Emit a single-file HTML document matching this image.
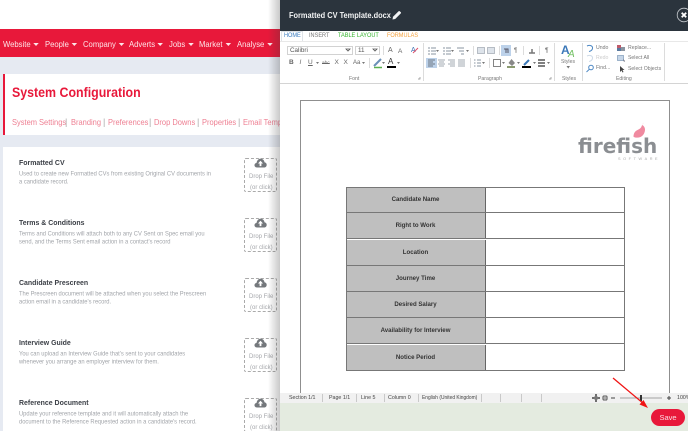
<!DOCTYPE html>
<html><head><meta charset="utf-8">
<style>
*{box-sizing:border-box}
html,body{margin:0;padding:0}
body{width:688px;height:431px;overflow:hidden;position:relative;background:#e6eaf2;font-family:"Liberation Sans",sans-serif}
#w{position:absolute;left:0;top:0;width:688px;height:431px;overflow:hidden;filter:blur(.35px)}
.a{position:absolute;white-space:nowrap}
.nav{color:#fde4e8;font-size:8.4px;top:39px;line-height:10px;transform:scaleX(.917);transform-origin:0 50%}
.nav:after{content:"";display:inline-block;border:3px solid transparent;border-top:3.5px solid #fde4e8;border-bottom:0;margin-left:3px;vertical-align:1.5px}
.lnk{top:118px;font-size:8.2px;color:#ee7f92;line-height:10px;transform:scaleX(.915);transform-origin:0 50%}
.bar{top:117px;font-size:9px;color:#aaa;line-height:11px}
.h{left:19px;font-size:7.5px;font-weight:700;color:#3b3f46;line-height:10px;transform:translateY(1px) scaleX(.927);transform-origin:0 50%}
.d{left:19px;font-size:6.2px;color:#a2a5aa;line-height:8.4px;white-space:nowrap;transform:translateY(1.5px) scaleX(.935);transform-origin:0 50%}
.drop{left:244px;width:33px;height:34px;border:1px dashed #aaa;border-radius:2px}
.dt{font-size:6px;color:#a4a6aa;left:249px;line-height:8px;transform:translateY(2px)}
.tab{top:31px;font-size:6.2px;line-height:9px;transform:scaleX(.903);transform-origin:0 50%}
.sb{top:394px;font-size:5.3px;color:#444;line-height:8px}
.sep{top:394px;width:1px;height:8px;background:#c9c9c9}
.lab{font-size:5.6px;color:#777;line-height:7px;transform:scaleX(.92);transform-origin:0 50%}
.row{left:346px;width:279px;height:26.3px}
.row b{position:absolute;left:0;top:0;width:140px;height:100%;background:#bfbfbf;border-right:1px solid #666;text-align:center;font-size:6.1px;color:#333;line-height:25px}
.rb{font-size:6.5px;color:#666;line-height:8px}
</style></head><body><div id="w">
<div class="a" style="left:0;top:0;width:280px;height:29px;background:#fff"></div>
<div class="a" style="left:0;top:29px;width:280px;height:28px;background:#e8183a"></div>
<div class="a nav" style="left:3px">Website</div>
<div class="a nav" style="left:45px">People</div>
<div class="a nav" style="left:83px">Company</div>
<div class="a nav" style="left:129px">Adverts</div>
<div class="a nav" style="left:169px">Jobs</div>
<div class="a nav" style="left:199px">Market</div>
<div class="a nav" style="left:237px">Analyse</div>

<div class="a" style="left:3px;top:74px;width:277px;height:61px;background:#fff;border-left:2px solid #e8183a"></div>
<div class="a" style="left:12px;top:85px;font-size:13.4px;font-weight:700;color:#e8183a;line-height:16px;transform:scaleX(.925);transform-origin:0 50%">System Configuration</div>
<div class="a lnk" style="left:12px">System Settings</div><div class="a bar" style="left:65px">|</div>
<div class="a lnk" style="left:71px">Branding</div><div class="a bar" style="left:103px">|</div>
<div class="a lnk" style="left:108px">Preferences</div><div class="a bar" style="left:149px">|</div>
<div class="a lnk" style="left:154px">Drop Downs</div><div class="a bar" style="left:197px">|</div>
<div class="a lnk" style="left:202px">Properties</div><div class="a bar" style="left:238px">|</div>
<div class="a lnk" style="left:243px">Email Temp</div>

<div class="a" style="left:3px;top:147px;width:277px;height:284px;background:#fff"></div>

<div class="a h" style="top:157px">Formatted CV</div>
<div class="a d" style="top:169px">Used to create new Formatted CVs from existing Original CV documents in<br>a candidate record.</div>
<div class="a h" style="top:217px">Terms &amp; Conditions</div>
<div class="a d" style="top:229px">Terms and Conditions will attach both to any CV Sent on Spec email you<br>send, and the Terms Sent email action in a contact's record</div>
<div class="a h" style="top:277px">Candidate Prescreen</div>
<div class="a d" style="top:289px">The Prescreen document will be attached when you select the Prescreen<br>action email in a candidate's record.</div>
<div class="a h" style="top:337px">Interview Guide</div>
<div class="a d" style="top:349px">You can upload an Interview Guide that's sent to your candidates<br>whenever you arrange an employer interview for them.</div>
<div class="a h" style="top:397px">Reference Document</div>
<div class="a d" style="top:409px">Update your reference template and it will automatically attach the<br>document to the Reference Requested action in a candidate's record.</div>

<div class="a drop" style="top:158px"></div><div class="a dt" style="top:171px">Drop File</div><div class="a dt" style="top:182px;left:250px">(or click)</div>
<svg class="a" style="left:254px;top:158px" width="13" height="10" viewBox="0 0 13 10"><path d="M3 9.5C1 9.5 .3 8 .5 6.8.8 5.5 1.7 5 2.5 5 3 2 5 .5 7 .7c2 .2 3.3 1.7 3.5 3.6 1.5.3 2.3 1.4 2.2 2.7-.1 1.5-1.2 2.5-2.7 2.5z" fill="#74787c"/><path d="M6.5 2.8 4 5.5h1.6v2.6h1.8V5.5H9z" fill="#fff"/></svg>
<div class="a drop" style="top:218px"></div><div class="a dt" style="top:231px">Drop File</div><div class="a dt" style="top:242px;left:250px">(or click)</div>
<svg class="a" style="left:254px;top:218px" width="13" height="10" viewBox="0 0 13 10"><path d="M3 9.5C1 9.5 .3 8 .5 6.8.8 5.5 1.7 5 2.5 5 3 2 5 .5 7 .7c2 .2 3.3 1.7 3.5 3.6 1.5.3 2.3 1.4 2.2 2.7-.1 1.5-1.2 2.5-2.7 2.5z" fill="#74787c"/><path d="M6.5 2.8 4 5.5h1.6v2.6h1.8V5.5H9z" fill="#fff"/></svg>
<div class="a drop" style="top:278px"></div><div class="a dt" style="top:291px">Drop File</div><div class="a dt" style="top:302px;left:250px">(or click)</div>
<svg class="a" style="left:254px;top:278px" width="13" height="10" viewBox="0 0 13 10"><path d="M3 9.5C1 9.5 .3 8 .5 6.8.8 5.5 1.7 5 2.5 5 3 2 5 .5 7 .7c2 .2 3.3 1.7 3.5 3.6 1.5.3 2.3 1.4 2.2 2.7-.1 1.5-1.2 2.5-2.7 2.5z" fill="#74787c"/><path d="M6.5 2.8 4 5.5h1.6v2.6h1.8V5.5H9z" fill="#fff"/></svg>
<div class="a drop" style="top:338px"></div><div class="a dt" style="top:351px">Drop File</div><div class="a dt" style="top:362px;left:250px">(or click)</div>
<svg class="a" style="left:254px;top:338px" width="13" height="10" viewBox="0 0 13 10"><path d="M3 9.5C1 9.5 .3 8 .5 6.8.8 5.5 1.7 5 2.5 5 3 2 5 .5 7 .7c2 .2 3.3 1.7 3.5 3.6 1.5.3 2.3 1.4 2.2 2.7-.1 1.5-1.2 2.5-2.7 2.5z" fill="#74787c"/><path d="M6.5 2.8 4 5.5h1.6v2.6h1.8V5.5H9z" fill="#fff"/></svg>
<div class="a drop" style="top:398px"></div><div class="a dt" style="top:411px">Drop File</div><div class="a dt" style="top:422px;left:250px">(or click)</div>
<svg class="a" style="left:254px;top:398px" width="13" height="10" viewBox="0 0 13 10"><path d="M3 9.5C1 9.5 .3 8 .5 6.8.8 5.5 1.7 5 2.5 5 3 2 5 .5 7 .7c2 .2 3.3 1.7 3.5 3.6 1.5.3 2.3 1.4 2.2 2.7-.1 1.5-1.2 2.5-2.7 2.5z" fill="#74787c"/><path d="M6.5 2.8 4 5.5h1.6v2.6h1.8V5.5H9z" fill="#fff"/></svg>

<!-- panel shadow -->
<div class="a" style="left:268px;top:0;width:12px;height:431px;background:linear-gradient(90deg,rgba(60,60,60,0),rgba(60,60,60,.28))"></div>

<!-- panel -->
<div class="a" style="left:280px;top:0;width:408px;height:431px;background:#fff"></div>
<div class="a" style="left:280px;top:0;width:408px;height:31px;background:#2b343d"></div>
<div class="a" style="left:289px;top:11px;font-size:8px;font-weight:700;color:#f2f3f4;line-height:10px;transform:scaleX(.925);transform-origin:0 50%">Formatted CV Template.docx</div>
<svg class="a" style="left:392px;top:10px" width="10" height="10" viewBox="0 0 10 10"><path d="M.5 9.500 1 6.800 6.600 1.200a.8.8 0 0 1 1.100 0l1.100 1.100a.8.8 0 0 1 0 1.100L3.200 9z" fill="#f2f3f4"/></svg>
<svg class="a" style="left:676px;top:7px" width="12" height="16" viewBox="0 0 12 16"><circle cx="8" cy="8" r="6.800" fill="none" stroke="#c8ccd0" stroke-width=".8"/><path d="M5.700 5.700 10.200 10.200M10.200 5.700 5.700 10.200" stroke="#fff" stroke-width="1.800"/></svg>

<!-- tabs -->
<div class="a" style="left:281px;top:31px;width:22px;height:10px;background:#fff;border:1px solid #dfe3e8;border-bottom:0"></div>
<div class="a tab" style="left:284px;color:#3a7cc0">HOME</div>
<div class="a tab" style="left:309px;color:#777">INSERT</div>
<div class="a tab" style="left:338px;color:#35b52e">TABLE LAYOUT</div>
<div class="a tab" style="left:387px;color:#f5a13c">FORMULAS</div>
<div class="a" style="left:280px;top:41px;width:408px;height:1px;background:#e8e8e8"></div>
<div class="a" style="left:280px;top:83px;width:408px;height:1px;background:#d4d4d4"></div>

<!-- ribbon text -->
<div class="a" style="left:287px;top:46px;width:66px;height:9px;border:1px solid #d2d2d2;font-size:6.3px;color:#555;line-height:7px;padding-left:2px">Calibri</div>
<div class="a" style="left:355px;top:46px;width:25px;height:9px;border:1px solid #d2d2d2;font-size:6.3px;color:#555;line-height:7px;padding-left:2px">11</div>
<div class="a rb" style="left:388px;top:47px;font-size:7px">A</div>
<div class="a rb" style="left:398px;top:47.500px;font-size:6.500px">A</div>
<div class="a rb" style="left:411px;top:47px;font-size:7px;color:#3b6fb0">A</div>
<div class="a rb" style="left:289px;top:59px;font-weight:700">B</div>
<div class="a rb" style="left:299.500px;top:59px;font-style:italic">I</div>
<div class="a rb" style="left:308px;top:59px;text-decoration:underline">U</div>
<div class="a rb" style="left:322px;top:60px;font-size:4.800px;line-height:7px;text-decoration:line-through">abc</div>
<div class="a rb" style="left:334.500px;top:59px">X</div>
<div class="a rb" style="left:343.500px;top:59px">X</div>
<div class="a rb" style="left:353px;top:59px;font-size:6px">Aa</div>
<div class="a rb" style="left:388px;top:58px;font-size:8px;color:#333">A</div>
<div class="a lab" style="left:349px;top:76px">Font</div>
<div class="a lab" style="left:478px;top:76px">Paragraph</div>
<div class="a rb" style="left:514px;top:47px;font-size:6px">¶</div>
<div class="a rb" style="left:545px;top:47px;font-size:6.500px">¶</div>
<div class="a" style="left:561px;top:44px;font-size:12px;font-weight:700;color:#3b78b8;line-height:13px">A</div>
<div class="a" style="left:568px;top:49px;font-size:10px;font-style:italic;color:#6fbf5f;line-height:11px">A</div>
<div class="a lab" style="left:561px;top:59px">Styles</div>
<div class="a lab" style="left:562px;top:76px">Styles</div>
<div class="a lab" style="left:596px;top:45px">Undo</div>
<div class="a lab" style="left:596px;top:55px;color:#ccc">Redo</div>
<div class="a lab" style="left:596px;top:65px">Find...</div>
<div class="a lab" style="left:628px;top:45px">Replace...</div>
<div class="a lab" style="left:628px;top:55px">Select All</div>
<div class="a lab" style="left:628px;top:66px">Select Objects</div>
<div class="a lab" style="left:616px;top:76px">Editing</div>

<!-- ribbon icons -->
<svg class="a" style="left:0;top:0" width="688" height="84" viewBox="0 0 688 84">
<g fill="#666"><path d="M346 49l2 2 2-2zM373 49l2 2 2-2z" stroke="#555" stroke-width=".8" fill="none"/></g>
<g stroke="#dcdcdc" stroke-width="1"><path d="M383.500 46v9M369.500 58v10M423.500 43v38M473.500 46v9M499.500 46v9M523.500 46v9M539.500 46v9M470.500 58v10M489.500 58v10M554.500 43v38M582.500 43v38M664.500 43v38"/></g>
<g fill="#777"><path d="M316 62h3l-1.500 2zM362 62h3l-1.500 2zM382 62h3l-1.500 2zM397 62h3l-1.500 2zM436 50h3l-1.500 2zM451 50h3l-1.500 2zM466 50h3l-1.500 2zM482 62h3l-1.500 2zM502 62h3l-1.500 2zM517 62h3l-1.500 2zM533 62h3l-1.500 2zM547 62h3l-1.500 2zM566.500 66h3.500l-1.750 2.500z"/></g>
<path d="M374 66 381 59" stroke="#6a90b8" stroke-width="2"/><path d="M374 67.500h8" stroke="#5bb04f" stroke-width="1.500"/>
<path d="M387 67h9" stroke="#000" stroke-width="2"/>
<path d="M413 53l5-5" stroke="#e0506a" stroke-width="1"/>
<g stroke="#8a94a0" stroke-width="1"><path d="M428 48h2M431 48h5M428 51h2M431 51h5M428 54h2M431 54h5"/><path d="M443 48h2M446 48h5M443 51h2M446 51h5M443 54h2M446 54h5"/><path d="M457 48h7M459 51h5M461 54h3"/></g>
<g fill="#dde3ea" stroke="#a8b0b8" stroke-width=".8"><rect x="477.500" y="47.500" width="7" height="6"/><rect x="487.500" y="47.500" width="7" height="6"/></g>
<rect x="501" y="45" width="10" height="11" fill="#bdd2ea"/>
<path d="M504 49h4v4M506 49v4" stroke="#556" stroke-width="1" fill="none"/>
<path d="M529 53h6M532 49v4" stroke="#777" stroke-width="1.500"/>
<rect x="426" y="58" width="11" height="10" fill="#bdd2ea"/>
<g stroke="#6d7884" stroke-width="1"><path d="M428 60h7M428 62h5M428 64h7M428 66h5"/></g>
<g stroke="#a0a8b0" stroke-width="1"><path d="M438 60h7M439 62h5M438 64h7M439 66h5M448 60h7M450 62h5M448 64h7M450 66h5M458 60h7M458 62h7M458 64h7M458 66h7"/></g>
<path d="M474 60h1.500M474 63h1.500M474 66h1.500M477 60h4M477 63h4M477 66h4" stroke="#8a94a0" stroke-width="1"/>
<rect x="493.500" y="59.500" width="7" height="7" fill="none" stroke="#777" stroke-width=".9"/>
<path d="M511.500 59l3.500 4-3 3-3.500-3z" fill="#888"/><path d="M507 67h8" stroke="#8a9a70" stroke-width="2"/>
<path d="M524 65l5-5" stroke="#3b78b8" stroke-width="2"/><path d="M522 67h9" stroke="#000" stroke-width="2"/>
<path d="M538 60h7M538 63h7M538 66h7" stroke="#555" stroke-width="1.400"/>
<path d="M418 79h2v-2M549 79h2v-2" stroke="#888" stroke-width=".7" fill="none"/>
<g fill="none"><path d="M587 46c3-1.500 6 0 5.500 2.500-.3 1.500-1.500 2.500-3.500 3" stroke="#4d88c4"/><path d="M587 56c3-1.500 6 0 5.500 2.500-.3 1.500-1.500 2.500-3.500 3" stroke="#cfdbe8"/><circle cx="591" cy="67.500" r="2.300" stroke="#4d88c4"/><path d="M589.300 69.300 586.500 72" stroke="#4d88c4"/></g>
<rect x="617" y="45" width="4" height="3" fill="#c05a6a"/><rect x="621" y="47" width="4" height="4" fill="#8a94a0"/><rect x="617" y="48" width="4" height="3" fill="#5a7aa0"/>
<rect x="617.500" y="55.500" width="6" height="5" fill="#c6d6e8" stroke="#8aa4c0" stroke-width=".8"/><path d="M623 59l2 2-1 1z" fill="#667"/>
<path d="M620 66v6l1.500-1.500 1 2 1-.5-1-2h2z" fill="#444"/>
</svg>

<!-- document -->
<div class="a" style="left:300px;top:100px;width:370px;height:293px;border:1px solid #8f8f8f;border-bottom:0;background:#fff"></div>
<div class="a" style="left:578px;top:134px;font-family:'DejaVu Sans',sans-serif;font-size:20px;font-weight:700;color:#8b8e92;line-height:24px">firefish</div>
<div class="a" style="left:618px;top:156.500px;font-size:3.800px;color:#aaa;line-height:5px;letter-spacing:2.600px">SOFTWARE</div>
<svg class="a" style="left:632px;top:122px" width="15" height="17" viewBox="0 0 15 17"><path d="M11.500.5c-.2 1-.8 1.800-1.500 2.500 1.500.5 3 2.200 3 4.500 0 3-1.500 6-4.500 7.500-2.500 1-5.500.8-7-.3C1.500 11.500 3 9 5.500 8 7.500 7 9 6 9.500 4.500 10 3 11 1.500 11.500.5z" fill="#f08aa0"/></svg>

<div class="a" style="left:346px;top:186.500px;width:279px;height:184px;border:1px solid #777;background:#fff"></div>
<div class="a row" style="top:187px;border-bottom:1px solid #777"><b>Candidate Name</b></div>
<div class="a row" style="top:213px;border-bottom:1px solid #777"><b>Right to Work</b></div>
<div class="a row" style="top:239.500px;border-bottom:1px solid #777"><b>Location</b></div>
<div class="a row" style="top:265.500px;border-bottom:1px solid #777"><b>Journey Time</b></div>
<div class="a row" style="top:291.500px;border-bottom:1px solid #777"><b>Desired Salary</b></div>
<div class="a row" style="top:318px;border-bottom:1px solid #777"><b>Availability for Interview</b></div>
<div class="a row" style="top:344.500px;height:25.500px"><b>Notice Period</b></div>
<div class="a" style="left:346px;top:186.500px;width:279px;height:184px;border:1px solid #777"></div>

<!-- status -->
<div class="a" style="left:280px;top:393px;width:408px;height:10px;background:#f1f1f1"></div>
<div class="a sb" style="left:289px">Section 1/1</div><div class="a sep" style="left:322px"></div>
<div class="a sb" style="left:329px">Page 1/1</div><div class="a sep" style="left:356px"></div>
<div class="a sb" style="left:361px">Line 5</div><div class="a sep" style="left:384px"></div>
<div class="a sb" style="left:388px">Column 0</div><div class="a sep" style="left:418px"></div>
<div class="a sb" style="left:422px;transform:scaleX(.92);transform-origin:0 50%">English (United Kingdom)</div><div class="a sep" style="left:481px"></div>
<div class="a sep" style="left:500px"></div><div class="a sep" style="left:521px"></div><div class="a sep" style="left:541px"></div>
<svg class="a" style="left:592px;top:394px" width="96" height="8" viewBox="0 0 96 8"><path d="M0 4h8M4 0v8" stroke="#444" stroke-width="1.500"/><circle cx="4" cy="4" r="2" fill="#777"/><circle cx="13" cy="4" r="3" fill="#777"/><path d="M13 1v6M10 4h6" stroke="#eee" stroke-width=".6"/><path d="M19 4h4" stroke="#444" stroke-width="1"/><path d="M28 4h42" stroke="#888" stroke-width=".8"/><rect x="48" y="1" width="2" height="6" fill="#333"/><path d="M75 4h4M77 2v4" stroke="#444" stroke-width="1"/></svg>
<div class="a sb" style="left:677px">100%</div>

<!-- footer -->
<div class="a" style="left:280px;top:403px;width:408px;height:28px;background:#e4ebe0"></div>
<div class="a" style="left:651px;top:409px;width:34px;height:17px;border-radius:9px;background:#e8183a;color:#fbdde2;font-size:7.500px;line-height:17px;text-align:center">Save</div>
<svg class="a" style="left:610px;top:375px" width="45" height="42" viewBox="0 0 45 42"><path d="M3 3 34 29" stroke="#f01414" stroke-width="1.300"/><path d="M38 33 29.500 29.500 33.500 25z" fill="#f01414"/></svg>
</div></body></html>
